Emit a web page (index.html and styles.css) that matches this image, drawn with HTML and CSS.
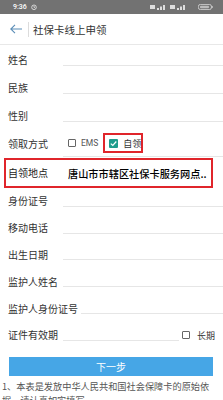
FILE: index.html
```html
<!DOCTYPE html>
<html lang="zh">
<head>
<meta charset="utf-8">
<title>社保卡线上申领</title>
<link rel="stylesheet" href="styles.css">
</head>
<body>
<div class="status">
  <span class="time">9:36</span>
  <svg class="alarm" width="6" height="6" viewBox="0 0 6 6"><circle cx="3" cy="3.3" r="2.3" fill="none" stroke="#eee" stroke-width="0.8"/><path d="M3 2v1.4h1" fill="none" stroke="#eee" stroke-width="0.7"/></svg>
  <span class="spacer"></span>
  <svg class="sig" width="18" height="6" viewBox="0 0 18 6"><rect x="0" y="1" width="5" height="4" fill="#ddd"/><path d="M7 6h2v-2h-2z M10 6h2v-3.5h-2z M13 6h2v-5h-2z" fill="#ddd"/></svg>
  <svg class="sig" width="18" height="6" viewBox="0 0 18 6"><rect x="0" y="1" width="5" height="4" fill="#ddd"/><path d="M7 6h2v-2h-2z M10 6h2v-3.5h-2z M13 6h2v-5h-2z" fill="#ddd"/></svg>
  <svg class="bat" width="15" height="6" viewBox="0 0 15 6"><rect x="0.4" y="0.4" width="13" height="5.2" rx="2" fill="none" stroke="#ddd" stroke-width="0.8"/><rect x="13.6" y="2" width="1" height="2" fill="#ddd"/><rect x="2" y="1.8" width="9" height="2.4" rx="1" fill="#bbb"/></svg>
</div>
<div class="header">
  <svg class="back" width="12" height="10" viewBox="0 0 12 10"><path d="M0.8 5H12 M5 0.8L0.8 5L5 9.2" fill="none" stroke="#5b8db7" stroke-width="1.1"/></svg>
  <span class="divider"></span>
  <span class="title">社保卡线上申领</span>
</div>
<div class="form">
  <div class="row tall"><span class="label">姓名</span><span class="field"></span></div>
  <div class="row tall"><span class="label">民族</span><span class="field"></span></div>
  <div class="row tall"><span class="label">性别</span><span class="field"></span></div>
  <div class="row tall"><span class="label">领取方式</span>
    <span class="field options">
      <span class="opt"><span class="box"></span><span class="opt-text ems">EMS</span></span>
      <span class="opt marked"><span class="box checked"><svg width="9" height="9" viewBox="0 0 9 9"><path d="M1.8 4.6L3.8 6.5L7.3 2.5" fill="none" stroke="#fff" stroke-width="1.2"/></svg></span><span class="opt-text">自领</span></span>
    </span>
  </div>
  <div class="row place"><span class="label">自领地点</span><span class="value">唐山市市辖区社保卡服务网点..</span></div>
  <div class="row"><span class="label">身份证号</span><span class="field"></span></div>
  <div class="row"><span class="label">移动电话</span><span class="field"></span></div>
  <div class="row"><span class="label">出生日期</span><span class="field"></span></div>
  <div class="row"><span class="label">监护人姓名</span><span class="field"></span></div>
  <div class="row"><span class="label">监护人身份证号</span><span class="field"></span></div>
  <div class="row"><span class="label">证件有效期</span><span class="field"></span>
    <span class="opt long"><span class="box"></span><span class="opt-text">长期</span></span>
  </div>
</div>
<div class="btn">下一步</div>
<p class="note">1、本表是发放中华人民共和国社会保障卡的原始依据，请认真如实填写。</p>
</body>
</html>
```
FILE: styles.css
```css
html, body {
  margin: 0;
  padding: 0;
}
body {
  width: 223px;
  height: 400px;
  overflow: hidden;
  background: #fff;
  font-family: "Noto Sans CJK SC", "Noto Sans", sans-serif;
  color: #333;
}
.status {
  height: 14px;
  background: #727272;
  display: flex;
  align-items: center;
  padding: 0 10px 0 13px;
  color: #fff;
}
.time {
  font-family: Roboto, sans-serif;
  font-size: 7px;
  font-weight: 500;
  line-height: 14px;
}
.alarm {
  margin-left: 4px;
}
.spacer {
  flex: 1;
}
.sig {
  margin-right: 2px;
}
.bat {
  margin-left: 8px;
}
.header {
  height: 30px;
  display: flex;
  align-items: center;
  border-bottom: 1px solid #e8e8e8;
}
.back {
  margin-left: 10px;
}
.divider {
  width: 1px;
  height: 15px;
  background: #dcdcdc;
  margin-left: 6px;
}
.title {
  margin-left: 4px;
  font-size: 10.5px;
  color: #333;
}
.form {
  padding-top: 1px;
}
.row {
  display: flex;
  align-items: center;
  height: 26.8px;
  padding-left: 8px;
}
.row.tall {
  height: 28px;
}
.label {
  flex: 0 0 auto;
  min-width: 52px;
  margin-right: 3px;
  font-size: 10px;
  line-height: 14px;
  color: #333;
}
.field {
  flex: 1;
  align-self: flex-end;
  height: 18px;
  margin-bottom: 8px;
  border-bottom: 1px solid #e6e6e6;
}
.options {
  display: flex;
  align-items: center;
  height: 26px;
  margin-bottom: 0;
  padding-left: 5px;
  align-self: stretch;
}
.opt {
  display: inline-flex;
  align-items: center;
  gap: 5px;
}
.opt-text {
  font-size: 9px;
  color: #333;
}
.ems {
  font-family: Roboto, sans-serif;
  font-size: 8.5px;
  color: #555;
}
.box {
  width: 8px;
  height: 8px;
  border: 1px solid #666;
  border-radius: 1px;
  box-sizing: border-box;
}
.box.checked {
  width: 9px;
  height: 9px;
  border: none;
  background: #1f9c8c;
  display: flex;
}
.marked {
  margin-left: 5px;
  border: 2px solid #e0252b;
  height: 20px;
  box-sizing: border-box;
  padding: 0 0 0 4px;
  width: 40px;
}
.row.place {
  height: 30px;
  margin: 0 10px 0 4px;
  padding-left: 2px;
  border: 2px solid #e0252b;
  box-sizing: border-box;
}
.place .label {
  min-width: 58px;
  margin-right: 2px;
  color: #222;
}
.value {
  font-size: 10.2px;
  font-weight: 500;
  color: #000;
  white-space: nowrap;
  overflow: hidden;
}
.long {
  margin-left: 3px;
  margin-right: 8px;
  gap: 7px;
}
.btn {
  margin: 8px 10px 0 9px;
  height: 19px;
  background: #46a6e6;
  color: #fff;
  font-size: 10px;
  display: flex;
  align-items: center;
  justify-content: center;
}
.note {
  margin: 3px 6px 0 2px;
  font-size: 9.2px;
  line-height: 14px;
  color: #555;
}
```
